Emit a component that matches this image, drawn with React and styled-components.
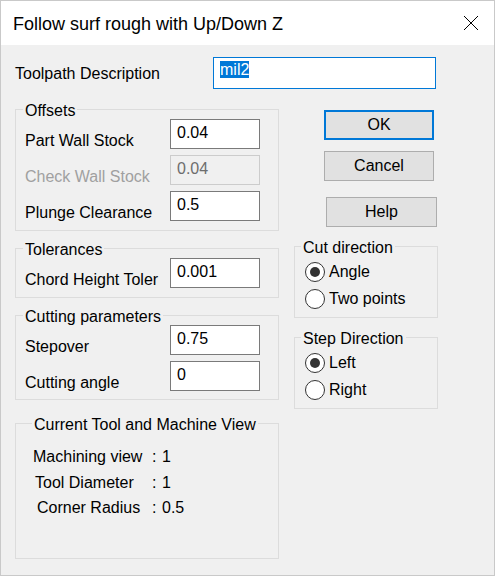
import React from "react"
import styled, { createGlobalStyle } from "styled-components"

const GlobalStyle = createGlobalStyle`
  body {
    margin: 0;
    background: #ffffff;
    font-family: "Liberation Sans", Arial, sans-serif;
  }
`

const offsets = [
  { label: "Part Wall Stock", value: "0.04" },
  { label: "Check Wall Stock", value: "0.04", disabled: true },
  { label: "Plunge Clearance", value: "0.5" },
]

const cutting = [
  { label: "Stepover", value: "0.75" },
  { label: "Cutting angle", value: "0" },
]

const toolInfo = [
  { label: "Machining view", value: "1", indent: 8 },
  { label: "Tool Diameter", value: "1", indent: 10 },
  { label: "Corner Radius", value: "0.5", indent: 12 },
]

const Radio = ({ checked, label }) => (
  <RadioRow>
    <RadioCircle $checked={checked} />
    <span>{label}</span>
  </RadioRow>
)

const FieldRow = ({ label, value, disabled }) => (
  <Row>
    <Label $disabled={disabled}>{label}</Label>
    <Input defaultValue={value} disabled={disabled} readOnly />
  </Row>
)

const App = () => {
  return (
    <>
      <GlobalStyle />
      <Window>
        <TitleBar>
          <Title>Follow surf rough with Up/Down Z</Title>
          <CloseButton>
            <svg width="16" height="16" viewBox="0 0 16 16">
              <path d="M1 1L15 15M15 1L1 15" stroke="#000" strokeWidth="1" fill="none" />
            </svg>
          </CloseButton>
        </TitleBar>

        <Body>
          <DescRow>
            <DescLabel>Toolpath Description</DescLabel>
            <DescBox>
              <Selected>mil2</Selected>
            </DescBox>
          </DescRow>

          <Main>
            <LeftCol>
              <Group>
                <Legend $indent={-2}>Offsets</Legend>
                <Rows $gap={6}>
                  {offsets.map((f) => <FieldRow key={f.label} {...f} />)}
                </Rows>
              </Group>

              <Group $mt={7}>
                <Legend $indent={-2}>Tolerances</Legend>
                <Rows>
                  <FieldRow label="Chord Height Toler" value="0.001" />
                </Rows>
              </Group>

              <Group $mt={7} $pb={8}>
                <Legend $indent={-2}>Cutting parameters</Legend>
                <Rows $gap={6}>
                  {cutting.map((f) => <FieldRow key={f.label} {...f} />)}
                </Rows>
              </Group>

              <Group $mt={13} $pb={0}>
                <Legend $indent={7}>Current Tool and Machine View</Legend>
                <InfoList>
                  {toolInfo.map((r) => (
                    <InfoRow key={r.label}>
                      <InfoLabel $indent={r.indent}>{r.label}</InfoLabel>
                      <span>:</span>
                      <span>{r.value}</span>
                    </InfoRow>
                  ))}
                </InfoList>
              </Group>
            </LeftCol>

            <RightCol>
              <Button $default $mt={11} $ml={30}>OK</Button>
              <Button $mt={11} $ml={30}>Cancel</Button>
              <Button $mt={16} $ml={32} $w={111}>Help</Button>

              <RadioGroup $mt={9}>
                <Legend $indent={-4}>Cut direction</Legend>
                <RadioList>
                  <Radio checked label="Angle" />
                  <Radio label="Two points" />
                </RadioList>
              </RadioGroup>

              <RadioGroup $mt={9}>
                <Legend $indent={-4}>Step Direction</Legend>
                <RadioList>
                  <Radio checked label="Left" />
                  <Radio label="Right" />
                </RadioList>
              </RadioGroup>
            </RightCol>
          </Main>
        </Body>
      </Window>
    </>
  )
}

const Window = styled.div`
  width: 495px;
  height: 576px;
  box-sizing: border-box;
  border: 1px solid #c9c9c9;
  background: #f0f0f0;
  display: flex;
  flex-direction: column;
  color: #000;
  font-size: 16px;
`

const TitleBar = styled.div`
  height: 44px;
  flex-shrink: 0;
  background: #ffffff;
  display: flex;
  align-items: center;
  justify-content: space-between;
  padding-left: 12px;
`

const Title = styled.span`
  font-size: 18px;
  padding-top: 2px;
`

const CloseButton = styled.div`
  width: 46px;
  height: 44px;
  display: flex;
  align-items: center;
  justify-content: center;
`

const Body = styled.div`
  flex: 1;
  padding: 12px 0 0 14px;
  display: flex;
  flex-direction: column;
`

const DescRow = styled.div`
  display: flex;
  align-items: flex-start;
`

const DescLabel = styled.span`
  width: 198px;
  padding-top: 8px;
  line-height: 18px;
`

const DescBox = styled.div`
  width: 223px;
  height: 32px;
  box-sizing: border-box;
  border: 1px solid #0078d7;
  background: #ffffff;
  padding: 3px 6px 0;
  line-height: 18px;
`

const Selected = styled.span`
  background: #0078d7;
  color: #ffffff;
`

const Main = styled.div`
  display: flex;
  gap: 15px;
  margin-top: 10px;
`

const LeftCol = styled.div`
  width: 264px;
  display: flex;
  flex-direction: column;
`

const RightCol = styled.div`
  width: 144px;
  display: flex;
  flex-direction: column;
  align-items: flex-start;
`

const Group = styled.fieldset`
  margin: ${(p) => p.$mt || 0}px 0 0;
  min-width: 0;
  box-sizing: border-box;
  width: 100%;
  border: 1px solid #dcdcdc;
  padding: 0 18px ${(p) => (p.$pb === undefined ? 9 : p.$pb)}px 9px;
`

const RadioGroup = styled(Group)`
  padding: 0 10px 5px 10px;
`

const Legend = styled.legend`
  font-size: 16px;
  line-height: 17px;
  padding: 3px 2px 0;
  margin-left: ${(p) => p.$indent || 0}px;
`

const Rows = styled.div`
  display: flex;
  flex-direction: column;
  gap: ${(p) => p.$gap || 0}px;
`

const Row = styled.div`
  display: flex;
  justify-content: space-between;
  align-items: flex-end;
`

const Label = styled.span`
  line-height: 16px;
  color: ${(p) => (p.$disabled ? "#a0a0a0" : "#000")};
`

const Input = styled.input`
  width: 90px;
  height: 30px;
  box-sizing: border-box;
  margin: 0;
  border: 1px solid #7a7a7a;
  border-radius: 0;
  background: #ffffff;
  padding: 0 6px 3px;
  font-family: "Liberation Sans", Arial, sans-serif;
  font-size: 16px;
  color: #000;
  outline: none;

  &:disabled {
    background: #f0f0f0;
    border-color: #cccccc;
    color: #6d6d6d;
    -webkit-text-fill-color: #6d6d6d;
  }
`

const InfoList = styled.div`
  height: 125px;
  box-sizing: border-box;
  padding-top: 11px;
  line-height: 25.5px;
`

const InfoRow = styled.div`
  display: grid;
  grid-template-columns: 127px 10px auto;
`

const InfoLabel = styled.span`
  padding-left: ${(p) => p.$indent}px;
`

const Button = styled.div`
  margin-top: ${(p) => p.$mt}px;
  margin-left: ${(p) => p.$ml}px;
  width: ${(p) => p.$w || 110}px;
  height: 30px;
  box-sizing: border-box;
  background: #e1e1e1;
  border: ${(p) => (p.$default ? "2px solid #0078d7" : "1px solid #adadad")};
  display: flex;
  align-items: center;
  justify-content: center;
  line-height: 18px;
`

const RadioList = styled.div`
  padding-top: 2px;
  display: flex;
  flex-direction: column;
`

const RadioRow = styled.div`
  height: 27px;
  display: flex;
  align-items: center;
  gap: 4px;
  line-height: 27px;
`

const RadioCircle = styled.span`
  width: 20px;
  height: 20px;
  box-sizing: border-box;
  border: 1.3px solid #333333;
  border-radius: 50%;
  background: #ffffff;
  display: flex;
  align-items: center;
  justify-content: center;
  flex-shrink: 0;

  &::after {
    content: "";
    width: 10px;
    height: 10px;
    border-radius: 50%;
    background: #333333;
    display: ${(p) => (p.$checked ? "block" : "none")};
  }
`

export default App
